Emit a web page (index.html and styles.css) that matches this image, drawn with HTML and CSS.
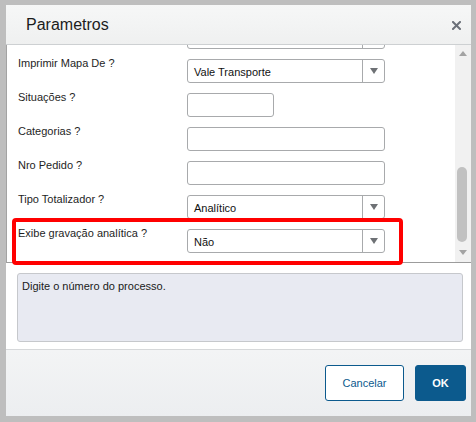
FILE: index.html
```html
<!DOCTYPE html>
<html lang="pt">
<head>
<meta charset="utf-8">
<title>Parametros</title>
<link rel="stylesheet" href="styles.css">
</head>
<body>
<div class="dialog">
  <div class="header">
    <div class="title">Parametros</div>
    <div class="close">
      <svg width="9" height="9" viewBox="0 0 9 9"><path d="M1 1L8 8M8 1L1 8" stroke="#6b7079" stroke-width="2" stroke-linecap="square"/></svg>
    </div>
  </div>
  <div class="scroll">
    <div class="content">
      <div class="row first">
        <div class="label"></div>
        <div class="select"><span class="val"></span><span class="arrow"><i class="tri"></i></span></div>
      </div>
      <div class="row">
        <div class="label">Imprimir Mapa De ?</div>
        <div class="select"><span class="val">Vale Transporte</span><span class="arrow"><i class="tri"></i></span></div>
      </div>
      <div class="row">
        <div class="label">Situações ?</div>
        <div class="input short"></div>
      </div>
      <div class="row">
        <div class="label">Categorias ?</div>
        <div class="input"></div>
      </div>
      <div class="row">
        <div class="label">Nro Pedido ?</div>
        <div class="input"></div>
      </div>
      <div class="row">
        <div class="label">Tipo Totalizador ?</div>
        <div class="select"><span class="val">Analítico</span><span class="arrow"><i class="tri"></i></span></div>
      </div>
      <div class="row">
        <div class="label">Exibe gravação analítica ?</div>
        <div class="select"><span class="val">Não</span><span class="arrow"><i class="tri"></i></span></div>
      </div>
    </div>
    <div class="scrollbar">
      <div class="sb-up"><i class="tri-up"></i></div>
      <div class="sb-track"><div class="thumb"></div></div>
      <div class="sb-down"><i class="tri-down"></i></div>
    </div>
  </div>
  <div class="help-zone">
    <div class="help">Digite o número do processo.</div>
  </div>
  <div class="footer">
    <button class="btn cancel">Cancelar</button>
    <button class="btn ok">OK</button>
  </div>
  <div class="highlight"></div>
</div>
</body>
</html>
```
FILE: styles.css
```css
* { box-sizing: border-box; }
html, body { margin: 0; padding: 0; }
body {
  background: #bebebe;
  font-family: "Liberation Sans", Arial, sans-serif;
  width: 476px;
  height: 422px;
  overflow: hidden;
}
.dialog {
  position: relative;
  margin: 5px 0 0 6px;
  width: 465px;
  height: 411px;
  background: #fff;
  display: flex;
  flex-direction: column;
}
.header {
  height: 40px;
  flex: none;
  display: flex;
  align-items: center;
  padding: 0 10px 0 20px;
  background: linear-gradient(#f6f7f7, #eff0f0);
  border-bottom: 1px solid #cdd0d2;
}
.title {
  font-size: 16px;
  color: #1c1c1c;
  padding-top: 1px;
}
.close {
  margin-left: auto;
  display: flex;
  padding-top: 2px;
}
.scroll {
  height: 218px;
  flex: none;
  display: flex;
  border-left: 1px solid #a3a3a3;
  border-bottom: 1px solid #9c9c9c;
}
.content {
  flex: 1;
  overflow: hidden;
  padding-left: 11px;
  display: flex;
  flex-direction: column;
  gap: 10px;
}
.row {
  display: flex;
  align-items: flex-start;
  height: 24px;
  flex: none;
}
.row.first { margin-top: -20px; }
.label {
  width: 169px;
  flex: none;
  font-size: 11px;
  line-height: 13px;
  margin-top: -2px;
  color: #1e1e1e;
}
.select, .input {
  width: 198px;
  height: 24px;
  border: 1px solid #a8aaac;
  border-radius: 3px;
  background: #fff;
}
.input.short { width: 87px; }
.select {
  display: flex;
  align-items: stretch;
}
.val {
  flex: 1;
  font-size: 11px;
  color: #111;
  padding-left: 6px;
  display: flex;
  align-items: center;
  padding-top: 1px;
}
.arrow {
  width: 22px;
  border-left: 1px solid #a8aaac;
  display: flex;
  align-items: center;
  justify-content: center;
}
.tri {
  width: 0;
  height: 0;
  border-left: 4px solid transparent;
  border-right: 4px solid transparent;
  border-top: 6px solid #6e7175;
}
.scrollbar {
  width: 16px;
  flex: none;
  background: #f1f1f1;
  display: flex;
  flex-direction: column;
}
.sb-up {
  height: 16px;
  display: flex;
  align-items: center;
  justify-content: center;
}
.sb-track { flex: 1; }
.thumb {
  margin: 106px 0 0 2px;
  width: 10px;
  height: 75px;
  border-radius: 5px;
  background: #c1c1c1;
}
.sb-down {
  height: 14px;
  display: flex;
  align-items: flex-start;
  justify-content: center;
  padding-top: 2px;
}
.tri-up, .tri-down {
  width: 0;
  height: 0;
  border-left: 4px solid transparent;
  border-right: 4px solid transparent;
}
.tri-up { border-bottom: 5px solid #a3a3a3; }
.tri-down { border-top: 5px solid #a3a3a3; }
.help-zone {
  height: 86px;
  flex: none;
  padding: 10px 8px 0 11px;
}
.help {
  height: 69px;
  background: #e8eaf2;
  border: 1px solid #c6c8cc;
  border-radius: 3px;
  padding: 6px 4px;
  font-size: 11px;
  line-height: 13px;
  color: #1a1a1a;
}
.footer {
  flex: 1;
  border-top: 1px solid #d6d8da;
  background: linear-gradient(#f3f4f5, #eceef0);
  display: flex;
  justify-content: flex-end;
  align-items: flex-start;
  padding: 15px 5px 0 0;
  gap: 11px;
}
.btn {
  height: 36px;
  border-radius: 3px;
  font-family: "Liberation Sans", Arial, sans-serif;
  font-size: 11px;
  cursor: pointer;
}
.cancel {
  width: 79px;
  background: #fff;
  border: 1px solid #0c5a8d;
  color: #0c5a8d;
}
.ok {
  width: 51px;
  background: #0c5a8d;
  border: 1px solid #0c5a8d;
  color: #fff;
  font-weight: bold;
}
.highlight {
  position: absolute;
  left: 6px;
  top: 213px;
  width: 391px;
  height: 47px;
  border: 4px solid #ff0000;
  border-radius: 4px;
  pointer-events: none;
}
```
